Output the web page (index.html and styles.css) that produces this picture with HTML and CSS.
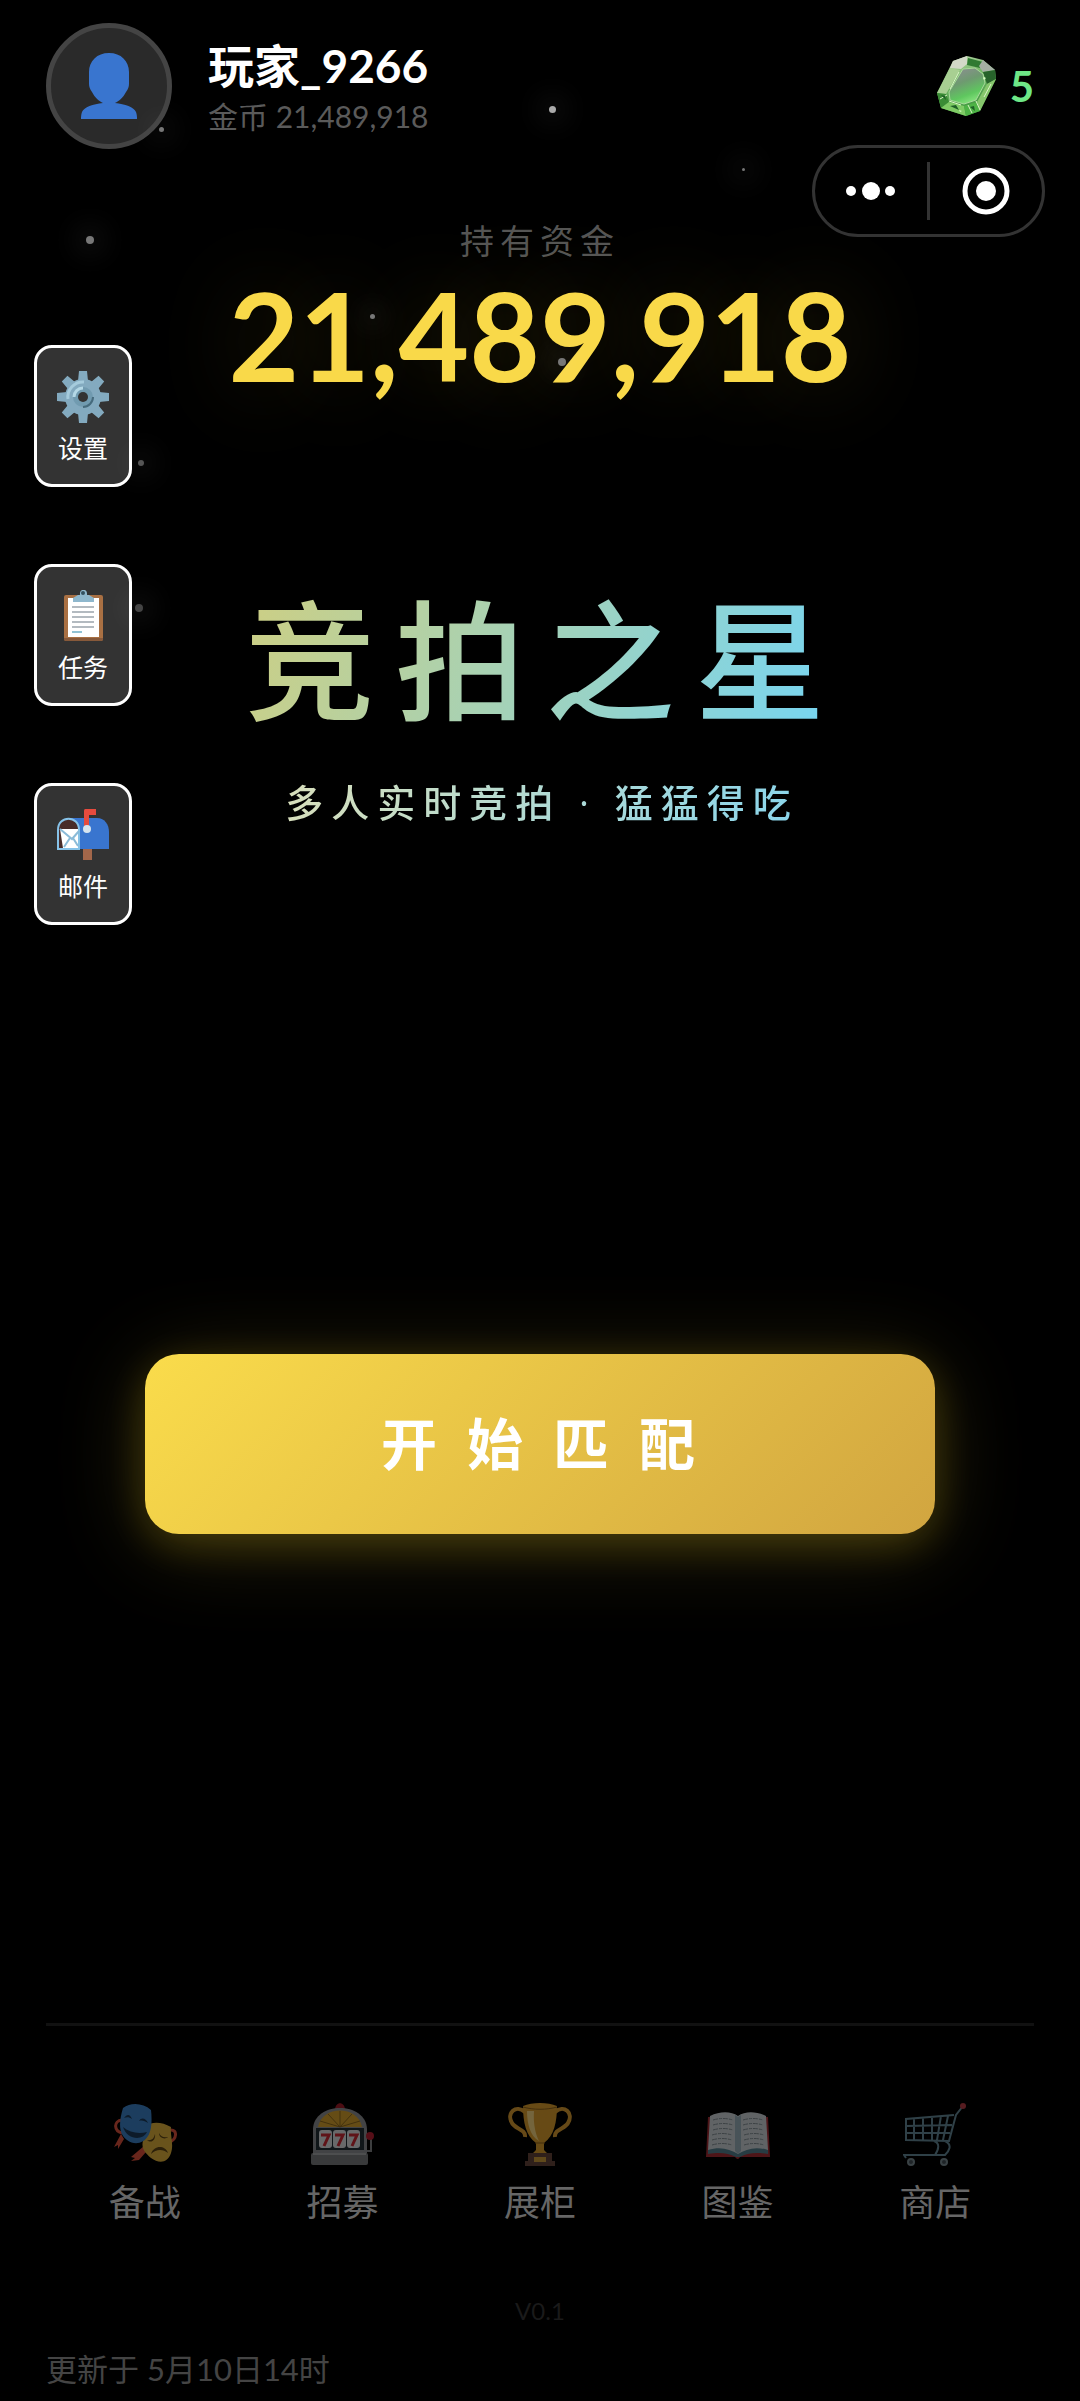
FILE: index.html
```html
<!DOCTYPE html>
<html lang="zh-CN">
<head>
<meta charset="utf-8">
<meta name="viewport" content="width=device-width, initial-scale=1">
<title>竞拍之星</title>
<link rel="stylesheet" href="styles.css">
</head>
<body>
<div class="app">
  <header class="topbar">
    <div class="avatar">
      <svg viewBox="0 0 56 66" aria-hidden="true"><path fill="#3975cf" d="M28 0C16 0 8 8 8 19v12c0 3 1 5 3 8 3 6 7 9 11 11-10 1-19 4-21 9-1 3-1 5-1 7h56c0-2 0-4-1-7-2-5-11-8-21-9 4-2 8-5 11-11 2-3 3-5 3-8V19C48 8 40 0 28 0z"/></svg>
    </div>
    <div class="player">
      <div class="player-name">玩家_9266</div>
      <div class="player-coins">金币 21,489,918</div>
    </div>
    <div class="gems">
      <svg class="gem" viewBox="0 0 60 62" aria-hidden="true">
        <defs>
          <linearGradient id="gemTable" x1="0.2" y1="0" x2="0.6" y2="1"><stop offset="0" stop-color="#8d8f92"/><stop offset="0.4" stop-color="#6e9a70"/><stop offset="0.75" stop-color="#5fc75f"/><stop offset="1" stop-color="#8be681"/></linearGradient>
          <linearGradient id="gemBody" x1="0" y1="0" x2="0.4" y2="1"><stop offset="0" stop-color="#c9dcb8"/><stop offset="0.5" stop-color="#6fb562"/><stop offset="1" stop-color="#3d9440"/></linearGradient>
        </defs>
        <path fill="url(#gemBody)" d="M31 1L47 5l12 10 1 9-16 32-14 5L5 53 1 38 17 6z"/>
        <path fill="#d3d9c8" d="M31 1L17 6l-3 7 11 1 6-5z"/>
        <path fill="#a8cf92" d="M14 13L1 38l9 1L24 15z"/>
        <path fill="#2f7a32" d="M32 3l15 4-3 6-13-3z"/>
        <path fill="#a5b0a4" d="M47 5l12 10-12 2-4-6z"/>
        <path fill="#27632b" d="M47 17l12-2 1 9-9 5z"/>
        <path fill="#86c66c" d="M51 29l9-5-16 32-3-9z"/>
        <path fill="#3a8c35" d="M1 38l9 1 3 8-8 6z"/>
        <path fill="#7fcb65" d="M5 53l8-6 15 4 2 10z"/>
        <path fill="#4eb346" d="M28 51l13-4 3 9-14 5z"/>
        <path fill="url(#gemTable)" stroke="#a9d99b" d="M27 14l12-1 8 6 2 9-9 17-12 4-14-4-1-8z"/>
        <path stroke="#dcf5c8" fill="none" d="M13 46l12 4M4 44l7-4M36 58l-4-8M44 55l-4-9M14 34l9-17M48 42l7-13"/>
        <path fill="#1f5f27" d="M14 51l6-1 3 5zM34 52l4-1 1 5zM5 40l4 1 1 4z"/>
        <path fill="#d7ffc4" d="M48 22l2 1-2 2-1-2zM23 55l3 1-2 1z"/>
      </svg>
      <span>5</span>
    </div>
  </header>

  <div class="capsule">
    <button type="button" aria-label="更多"><svg width="50" height="20" viewBox="0 0 50 20"><g fill="#fff"><circle cx="5" cy="10" r="5"/><circle cx="25" cy="10" r="9"/><circle cx="44" cy="10" r="5"/></g></svg></button>
    <button type="button" aria-label="关闭"><svg width="48" height="48" viewBox="0 0 48 48"><circle cx="24" cy="24" r="21" fill="none" stroke="#fff" stroke-width="5"/><circle cx="24" cy="24" r="10" fill="#fff"/></svg></button>
  </div>

  <main class="stage">
    <div class="hero">
      <div class="funds-label">持有资金</div>
      <div class="funds-value">21,489,918</div>
      <h1 class="title">竞拍之星</h1>
      <p class="slogan">多人实时竞拍 · 猛猛得吃</p>
      <button type="button" class="match">开始匹配</button>
    </div>

    <div class="side-menu">
      <button type="button">
        <svg viewBox="0 0 52 52" aria-hidden="true">
          <g fill="#83aabf"><circle cx="26" cy="26" r="18"/>
            <path d="M22 0h8l1 10H21zM22 52h8l1-10H21z"/>
            <path d="M22 0h8l1 10H21zM22 52h8l1-10H21z" transform="rotate(45 26 26)"/>
            <path d="M22 0h8l1 10H21zM22 52h8l1-10H21z" transform="rotate(90 26 26)"/>
            <path d="M22 0h8l1 10H21zM22 52h8l1-10H21z" transform="rotate(135 26 26)"/></g>
          <path d="M11 28a15 15 0 0 1 16-17" fill="none" stroke="#a5cbdc" stroke-width="3"/>
          <circle cx="26" cy="26" r="10" fill="#719bb0"/>
          <path d="M17 26a9 9 0 0 1 9-9" fill="none" stroke="#b4d8e6" stroke-width="3"/>
          <path d="M36 26a10 10 0 0 1-10 10" fill="none" stroke="#456a7c" stroke-width="2"/>
          <circle cx="26" cy="26" r="5" fill="#333"/>
        </svg>
        <span>设置</span>
      </button>
      <button type="button">
        <svg viewBox="0 0 52 52" aria-hidden="true">
          <rect x="7" y="5" width="39" height="46" rx="2" fill="#a97043"/>
          <path fill="#87593a" d="M7 48h39v1a2 2 0 0 1-2 2H9a2 2 0 0 1-2-2z"/>
          <path fill="#fff" d="M11 8h31v39H11z"/>
          <path fill="#8eb7cd" d="M16 12V8l5-3h2c-1-7 8-7 7 0h2l5 3v4z"/><circle cx="26" cy="3" r="2" fill="#33515f"/>
          <path stroke="#b3bac0" stroke-width="2" d="M15 17h22M15 22h22M15 27h22M15 32h22M15 37h22"/><path stroke="#92c3d5" stroke-width="2" d="M15 42h10"/>
        </svg>
        <span>任务</span>
      </button>
      <button type="button">
        <svg viewBox="0 0 52 52" aria-hidden="true">
          <path fill="#a3674a" d="M26 38h9v13h-9z"/>
          <path fill="#3975cf" d="M11 9h29c8 0 12 7 12 14v17H22z"/>
          <path fill="#482c29" stroke="#86c2e8" stroke-width="2" d="M1 40V21c0-15 21-15 21 0v19z"/>
          <path fill="#fff" d="M3 20h18v19H6z"/><path fill="none" stroke="#8bbbd8" stroke-width="2" d="M3 20l12 10 7-8M7 38l6-9M21 37l-5-8"/>
          <path fill="#e64b3e" d="M27 21V2c0-2 1-2 2-2h10v6h-7v15z"/><circle cx="30" cy="20" r="4" fill="#d6e4ef"/>
        </svg>
        <span>邮件</span>
      </button>
    </div>
  </main>

  <nav class="tabs">
    <a href="#battle">
      <svg viewBox="0 0 64 64" aria-hidden="true">
        <path fill="none" stroke="#d9503b" stroke-width="3" d="M9 17c-9 1-8 11 0 13M57 27c8-1 7 10-1 12"/>
        <path fill="#d9503b" d="M8 31l-7 13 4-2v4l6-10zM31 43L18 54l4 1-4 3 8-1 7-8z"/>
        <path fill="#dcae3c" d="M32 23c8-5 17-4 26 1-1 9 3 17 0 26-3 10-12 11-20 5-6-5-10-10-8-17z"/>
        <path fill="#3b7fc4" d="M10 5c8-6 20-5 28 2 1 8 1 20-3 26-4 7-13 10-21 4C5 31 6 18 10 5z"/>
        <path fill="#1c3a58" d="M10 24c7 6 16 7 24 5-4 9-20 8-24-5zM11 15c3-4 6-4 8 1-3-2-5-2-8-1zM26 18c2-4 7-3 9 2-3-2-6-3-9-2z"/>
        <path fill="#5c4415" d="M38 51c3-9 14-9 17-1-5-4-12-4-17 1zM34 37c4 1 7-1 8-6 1 6-4 10-8 6zM46 30c2 4 5 5 9 4-3 3-9 1-9-4z"/>
      </svg>
      <span>备战</span>
    </a>
    <a href="#recruit">
      <svg viewBox="0 0 64 64" aria-hidden="true">
        <path fill="#a01c28" d="M25 7c0-9 10-9 10 0z"/>
        <path fill="#8b8d90" d="M3 52V26C4-2 56-2 57 26v26z"/>
        <path fill="#d4a02c" d="M8 24C12 2 48 2 52 24z"/><path stroke="#8b681e" fill="none" d="M30 24V8M30 24L18 11M30 24l12-13M30 24L10 18M30 24l20-6"/>
        <path fill="#222e36" d="M6 25h48v22H6z"/>
        <g fill="#d9dcdd"><rect x="9" y="27" width="13" height="18" rx="3"/><rect x="23" y="27" width="13" height="18" rx="3"/><rect x="37" y="27" width="13" height="18" rx="3"/></g>
        <path fill="none" stroke="#c62832" stroke-width="3" d="M11 32h8l-5 11M25 32h8l-5 11M39 32h8l-5 11"/>
        <path fill="none" stroke="#808285" stroke-width="2" d="M57 48h4V34"/><circle cx="60" cy="33" r="4" fill="#b31e30"/>
        <rect x="1" y="50" width="57" height="12" rx="2" fill="#77797c"/><path fill="#a1a3a5" d="M3 50h53v2H3z"/>
      </svg>
      <span>招募</span>
    </a>
    <a href="#cabinet">
      <svg viewBox="0 0 64 64" aria-hidden="true">
        <path fill="none" stroke="#d59a31" stroke-width="4" d="M17 9C8 1-2 10 4 20c3 6 14 6 13 14M47 9c9-8 19 1 13 11-3 6-14 6-13 14"/>
        <path fill="#d79c2c" d="M15 3c9-4 25-4 34 0 0 16-3 30-13 37v7l5 5H23l5-5v-7C18 33 15 19 15 3z"/>
        <path fill="#f3d381" d="M19 8h7c-1 14 2 24 5 30C22 33 19 20 19 8z"/>
        <path fill="none" stroke="#8c611c" d="M15 4c10 3 24 3 34 0M27 40h10"/>
        <path fill="#624439" d="M20 50h24v8h3v5H17v-5h3z"/><path fill="#c89a39" d="M26 54h12v5H26z"/>
      </svg>
      <span>展柜</span>
    </a>
    <a href="#atlas">
      <svg viewBox="0 0 64 64" aria-hidden="true">
        <path fill="#a12d34" d="M2 14h60l2 40H34q-2 4-5 0H0z"/>
        <path fill="#527d8c" d="M2 46c12-3 22-1 30 4 8-5 18-7 30-4v5c-12-2-21-1-28 3h-4c-8-4-16-5-28-3z"/>
        <path fill="#c8d0d4" d="M4 13c10-5 21-5 28 0 7-5 18-5 28 0l2 34c-12-4-22-1-30 4-8-5-18-8-30-4z"/>
        <path fill="#96adb8" d="M29 12l3 2 3-2v36l-3 3-3-3z"/>
        <path fill="none" stroke="#7f8a90" stroke-dasharray="5 1 3 1" d="M7 17q10-3 20 0M7 22q10-3 20 0M7 27q10-3 20 0M6 32q10-3 20 0M6 37q10-3 20 0M6 42q10-3 20 0M37 17q10-3 20 0M37 22q10-3 20 0M37 27q10-3 20 0M38 32q10-3 20 0M38 37q10-3 20 0M38 42q10-3 20 0"/>
      </svg>
      <span>图鉴</span>
    </a>
    <a href="#shop">
      <svg viewBox="0 0 64 64" aria-hidden="true">
        <g fill="none" stroke="#638795" stroke-width="2"><path d="M60 3l-7 9-7 26-43-1V16l48-4M3 23l46-1M3 30l44 0M11 16v21M20 15v22M29 14v23M38 13l-4 24M45 13l-5 24M31 38c6 2 5 8 1 14M42 38c8 4 4 10 0 14H1l2 3"/></g>
        <circle cx="60" cy="3" r="3" fill="#b43b43"/>
        <g fill="#414d53" stroke="#78898f" stroke-width="2"><circle cx="8" cy="59" r="3"/><circle cx="41" cy="59" r="3"/></g>
      </svg>
      <span>商店</span>
    </a>
  </nav>

  <footer class="footer">
    <div class="version">V0.1</div>
    <div class="updated">更新于 5月10日14时</div>
  </footer>

  <div class="stars" aria-hidden="true">
    <i class="star s1"></i><i class="star s2"></i><i class="star s3"></i><i class="star s4"></i><i class="star s5"></i><i class="star s6"></i><i class="star s7"></i><i class="star s8"></i>
  </div>
</div>
</body>
</html>
```

FILE: styles.css
```css
* { box-sizing: border-box; }

body {
  margin: 0;
  background: #000;
  color: #fff;
  font-family: Lato, "Noto Sans CJK SC", sans-serif;
}

button {
  margin: 0;
  padding: 0;
  border: 0;
  background: none;
  color: inherit;
  font: inherit;
}

.app {
  position: relative;
  display: flex;
  flex-direction: column;
  min-height: 100vh;
  overflow: hidden;
}

.topbar {
  display: flex;
  align-items: center;
  gap: 36px;
  padding: 23px 46px 0;
}

.avatar {
  display: grid;
  place-items: center;
  width: 126px;
  height: 126px;
  border: 5px solid #444;
  border-radius: 50%;
  background: #2a2a2a;
}
.avatar svg { width: 56px; height: 66px; }

.player {
  flex: 1;
  padding-top: 4px;
}
.player-name {
  font-size: 46px;
  font-weight: 700;
  line-height: 56px;
}
.player-coins {
  color: #5a5a5a;
  font-size: 30px;
  line-height: 44px;
}

.gems {
  display: flex;
  align-items: center;
  gap: 14px;
  color: #6ee787;
  font-size: 42px;
  font-weight: 700;
}
.gem { width: 60px; height: 62px; }

/* Host-app capsule floats above the page */
.capsule {
  position: absolute;
  top: 145px;
  right: 35px;
  display: flex;
  align-items: center;
  width: 233px;
  height: 92px;
  border: 3px solid #333;
  border-radius: 46px;
}
.capsule button {
  display: grid;
  flex: 1;
  place-items: center;
  height: 58px;
}
.capsule button + button { border-left: 3px solid #333; }

.stage {
  display: grid;
  flex: 1;
  padding-top: 64px;
}
.hero,
.side-menu { grid-area: 1 / 1; }

.hero {
  display: flex;
  flex-direction: column;
  align-items: center;
}

.funds-label {
  color: #555;
  font-size: 34px;
  letter-spacing: 6px;
  line-height: 56px;
}
.funds-value {
  color: #f9d949;
  font-size: 122px;
  font-weight: 700;
  line-height: 132px;
  text-shadow: 0 0 90px rgba(249, 217, 73, 0.2);
}

.title,
.slogan {
  margin: 0;
  background-clip: text;
  -webkit-background-clip: text;
  color: transparent;
}
.title {
  margin-top: 169px;
  padding-left: 10px;
  background-image: linear-gradient(110deg, #cbcf86 5%, #78d5f0 95%);
  font-size: 130px;
  font-weight: 500;
  letter-spacing: 20px;
  line-height: 180px;
}
.slogan {
  margin-top: 22px;
  padding-left: 4px;
  background-image: linear-gradient(110deg, #dadfba, #89d5ec);
  font-family: "Open Sans", "Noto Sans CJK SC", sans-serif;
  font-size: 38px;
  font-weight: 500;
  letter-spacing: 8px;
  line-height: 60px;
}

.match {
  width: 73.2%;
  height: 180px;
  margin-top: 522px;
  padding: 0 0 8px 26px;
  border-radius: 34px;
  background: linear-gradient(135deg, #fadc4b, #d1a540);
  box-shadow: 0 10px 90px rgba(249, 217, 73, 0.18), 0 10px 40px rgba(249, 217, 30, 0.2);
  font-size: 56px;
  font-weight: 700;
  letter-spacing: 30px;
}

.side-menu {
  display: flex;
  flex-direction: column;
  align-self: start;
  justify-self: start;
  gap: 77px;
  padding: 132px 0 0 34px;
}
.side-menu button {
  display: flex;
  flex-direction: column;
  align-items: center;
  justify-content: center;
  gap: 7px;
  width: 98px;
  height: 142px;
  padding-top: 5px;
  border: 3px solid #fff;
  border-radius: 18px;
  background: #333;
  font-size: 25px;
  line-height: 36px;
}
.side-menu svg { width: 52px; height: 52px; }

.tabs {
  display: grid;
  grid-template-columns: repeat(5, 1fr);
  margin: 0 46px;
  padding-top: 77px;
  border-top: 3px solid #111;
}
.tabs a {
  display: flex;
  flex-direction: column;
  align-items: center;
  gap: 10px;
  color: #666;
  font-size: 36px;
  line-height: 50px;
  text-decoration: none;
}
.tabs svg { width: 64px; height: 64px; opacity: 0.48; }

.footer { padding: 64px 46px 8px; }
.version {
  color: #1a1a1a;
  font-size: 24px;
  line-height: 40px;
  text-align: center;
}
.updated {
  margin-top: 14px;
  color: #444;
  font-size: 31px;
  line-height: 48px;
}

.stars {
  position: absolute;
  inset: 0;
  pointer-events: none;
}
.star {
  position: absolute;
  width: 7px;
  height: 7px;
  border-radius: 50%;
  background: #777;
  box-shadow: 0 0 30px 6px rgba(255, 255, 255, 0.14);
}
.s1 { left: 14.7%; top: 127px; width: 5px; height: 5px; }
.s2 { left: 8%; top: 236px; width: 8px; height: 8px; }
.s3 { left: 50.8%; top: 106px; background: #aaa; }
.s4 { left: 68.7%; top: 168px; width: 3px; height: 3px; }
.s5 { left: 34.3%; top: 314px; width: 5px; height: 5px; }
.s6 { left: 51.7%; top: 358px; width: 8px; height: 8px; }
.s7 { left: 12.8%; top: 460px; width: 6px; height: 6px; background: #555; }
.s8 { left: 12.5%; top: 604px; width: 8px; height: 8px; background: #444; }
```
